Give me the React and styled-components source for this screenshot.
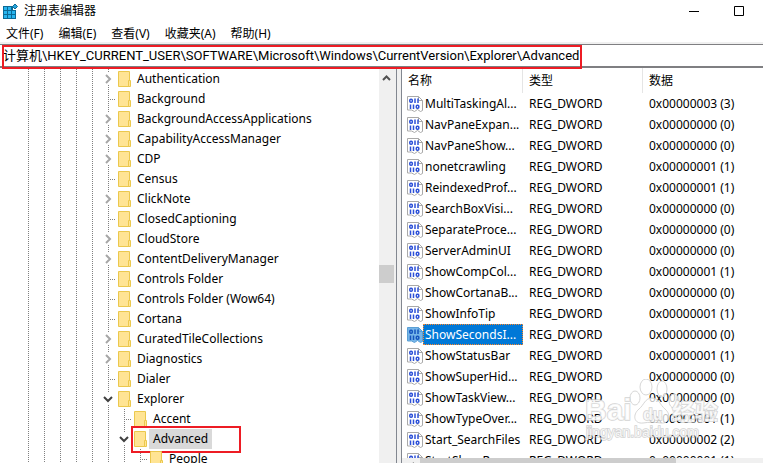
import React from "react";
import styled, { createGlobalStyle, css } from "styled-components";

const Global = createGlobalStyle`
  *, *::before, *::after { box-sizing: border-box; }
  body {
    margin: 0;
    background: #fff;
    color: #000;
    font-family: "Noto Sans", "Noto Sans CJK SC", sans-serif;
    font-size: 12px;
  }
  button, input, table { font: inherit; color: inherit; }
`;

const DOT = "#808080";

const Window = styled.div`
  display: flex;
  flex-direction: column;
  height: 100vh;
  overflow: hidden;
  background: #fff;
`;

const TitleBar = styled.header`
  display: flex;
  align-items: center;
  flex: none;
  height: 22px;
  padding: 0 2px;
`;

const Title = styled.h1`
  flex: 1;
  margin: 0 0 0 6px;
  font-size: 12px;
  font-weight: 400;
  line-height: 20px;
`;

const WindowButton = styled.button`
  display: flex;
  align-items: center;
  justify-content: center;
  width: 45px;
  height: 20px;
  padding: 0;
  border: 0;
  background: none;
`;

const MenuBar = styled.nav`
  display: flex;
  align-items: flex-end;
  gap: 15px;
  flex: none;
  height: 20px;
  padding: 0 6px;
`;

const MenuButton = styled.button`
  padding: 0;
  border: 0;
  background: none;
  line-height: 16px;
  white-space: nowrap;
`;

const AddressBar = styled.div`
  position: relative;
  flex: none;
  height: 26px;
  border-top: 2px solid #f0f0f0;
`;

const AddressInput = styled.input`
  display: block;
  width: 100%;
  height: 24px;
  padding: 0 3px 2px;
  border: solid #7f7f82;
  border-width: 1px 0 2px;
  outline: 0;
  background: #fff;
  font-family: Roboto, "Noto Sans CJK SC", sans-serif;
  font-size: 13px;
`;

const marked = css`
  position: absolute;
  border: 2px solid #ed1c24;
  pointer-events: none;
`;

const AddressMark = styled.span`
  ${marked}
  left: 2px;
  top: 1px;
  width: 580px;
  height: 24px;
`;

const RowMark = styled.span`
  ${marked}
  left: -3px;
  top: -3px;
  width: 110px;
  height: 27px;
`;

const Panes = styled.main`
  display: flex;
  flex: 1;
  min-height: 0;
`;

const TreePane = styled.section`
  display: flex;
  flex: 0 0 397px;
  border-right: 1px solid #828790;
`;

const Tree = styled.ul`
  flex: 1;
  min-width: 0;
  margin: 0;
  padding: 1px 0 0 20px;
  overflow: hidden;
  list-style: none;
`;

const TreeRow = styled.li`
  display: flex;
  align-items: center;
  height: 20px;
`;

const Guide = styled.span`
  flex: none;
  width: 16px;
  height: 20px;
  background: repeating-linear-gradient(${DOT} 0 1px, transparent 1px 2px) 8px 0 / 1px 100% no-repeat;
`;

const Leaf = styled.span`
  flex: none;
  width: 16px;
  height: 20px;
  background:
    repeating-linear-gradient(${DOT} 0 1px, transparent 1px 2px) 8px 0 / 1px 100% no-repeat,
    repeating-linear-gradient(90deg, ${DOT} 0 1px, transparent 1px 2px) 8px 10px / 7px 1px no-repeat;
`;

const Toggle = styled.button`
  display: flex;
  align-items: center;
  justify-content: center;
  flex: none;
  width: 16px;
  height: 20px;
  padding: 0;
  border: 0;
  background:
    repeating-linear-gradient(${DOT} 0 1px, transparent 1px 2px) 8px 0 / 1px 3px no-repeat,
    repeating-linear-gradient(${DOT} 0 1px, transparent 1px 2px) 8px 100% / 1px 4px no-repeat;
`;

const TreeItem = styled.span`
  position: relative;
  display: flex;
  align-items: center;
  gap: 2px;
  margin-left: 2px;
`;

const TreeLabel = styled.span`
  padding: 0 4px;
  line-height: 20px;
  white-space: nowrap;
  background: ${(p) => (p.$selected ? "#d9d9d9" : "transparent")};
`;

const ScrollTrack = styled.div`
  display: flex;
  flex-direction: column;
  align-items: flex-start;
  flex: none;
  width: 17px;
  margin-top: 1px;
  background: #f0f0f0;
`;

const ScrollUp = styled.button`
  display: flex;
  align-items: center;
  justify-content: center;
  width: 15px;
  height: 18px;
  margin-bottom: 178px;
  padding: 0;
  border: 0;
  background: none;
`;

const ScrollThumb = styled.span`
  width: 15px;
  height: 18px;
  background: #cdcdcd;
`;

const Splitter = styled.div`
  flex: 0 0 5px;
  background: #f0f0f0;
  border-right: 1px solid #828790;
`;

const ValuesPane = styled.section`
  display: flex;
  flex-direction: column;
  flex: 1;
  min-width: 0;
`;

const TableArea = styled.div`
  flex: 1;
  min-height: 0;
  overflow: hidden;
`;

const Values = styled.table`
  width: 100%;
  border-collapse: separate;
  border-spacing: 0;
  table-layout: fixed;
`;

const HeadCell = styled.th`
  width: ${(p) => p.$width || "auto"};
  height: 25px;
  padding: 0 6px;
  border-right: ${(p) => (p.$width ? "1px solid #e5e5e5" : "0")};
  font-weight: 400;
  line-height: 24px;
  text-align: left;
`;

const Cell = styled.td`
  height: 21px;
  padding: 0 6px;
  line-height: 19px;
  white-space: nowrap;
`;

const NameCell = styled(Cell)`
  padding: 0;
`;

const ValueName = styled.span`
  display: flex;
  align-items: center;
  height: 21px;
  padding-left: 5px;
`;

const ValueLabel = styled.span`
  flex: 1;
  min-width: 0;
  height: 21px;
  padding: 0 1px;
  border: 1px dotted ${(p) => (p.$selected ? "#ff8728" : "transparent")};
  background: ${(p) => (p.$selected ? "#0078d7" : "transparent")};
  color: ${(p) => (p.$selected ? "#fff" : "inherit")};
  line-height: 19px;
  white-space: nowrap;
`;

const HorizontalScroll = styled.div`
  display: flex;
  flex: none;
  height: 5px;
  overflow: hidden;
  background: #f0f0f0;
`;

const ScrollLeft = styled.button`
  display: flex;
  justify-content: center;
  flex: none;
  width: 18px;
  height: 17px;
  padding: 4px 0 0 2px;
  border: 0;
  background: none;
`;

const HorizontalThumb = styled.span`
  width: 71%;
  background: #cdcdcd;
`;

const Watermark = styled.div`
  position: absolute;
  right: 43px;
  bottom: 14px;
  pointer-events: none;
`;

const AppIcon = () => (
  <svg width="16" height="18" viewBox="0 0 16 18" aria-hidden="true">
    <path d="M1 4h10v4h3v9H1z" fill="#0b6a96" />
    <path d="M2 5h3v3H2zM6 5h3v3H6zM2 9h3v3H2zM6 9h3v3H6zM10 9h3v3h-3zM2 13h3v3H2zM6 13h3v3H6zM10 13h3v3h-3z" fill="#27b4ee" />
    <path d="M13 2l2.500 2.500L13 7l-2.500-2.500z" fill="#27a5dc" stroke="#0b6a96" strokeWidth="1" />
  </svg>
);

const Folder = () => (
  <svg width="13" height="17" viewBox="0 0 13 17" aria-hidden="true">
    <path d="M.5 .5h11v15H.5z" fill="#ffe494" stroke="#ebc84d" />
    <path d="M10.500 9.500h2v6h-2z" fill="#ffe494" stroke="#ebc84d" />
  </svg>
);

const Chevron = ({ open }) => (
  <svg width="10" height="10" viewBox="0 0 10 10" fill="none" strokeWidth="2" aria-hidden="true">
    {open ? <path d="M1 3l4 4 4-4" stroke="#404040" /> : <path d="M3 1l4 4-4 4" stroke="#a6a6a6" />}
  </svg>
);

const BinaryIcon = ({ selected }) => (
  <svg width="16" height="16" viewBox="0 0 16 16" fill="none" aria-hidden="true">
    <path d="M.5 .5h11l4 4v10l-2 1-3-2-3 2-3-1.500H.5z" fill={selected ? "#76b5e8" : "#fff"} stroke={selected ? "#5a9fd4" : "#a9a9a9"} />
    <path d="M11.500 .5v4h4" stroke={selected ? "#5a9fd4" : "#a9a9a9"} />
    <g stroke={selected ? "#1554bd" : "#2c50d8"} strokeWidth="1.500">
      <rect x="2.800" y="3.300" width="2.500" height="3" rx="1" />
      <path d="M8 2.500v4.500M11 2.500v4.500M3.500 8.500v4.500M6.500 8.500v4.500" />
      <rect x="9.300" y="9.300" width="2.500" height="3" rx="1" />
    </g>
  </svg>
);

const Paws = () => (
  <svg width="136" height="66" viewBox="0 0 136 66" aria-hidden="true">
    <g fill="#fff" fillOpacity=".75" stroke="#d2d2d2" strokeOpacity=".9">
      <ellipse cx="62" cy="8" rx="6" ry="8" />
      <ellipse cx="78" cy="10" rx="5" ry="8" />
      <ellipse cx="51" cy="19" rx="5" ry="7" />
      <ellipse cx="90" cy="22" rx="5" ry="7" />
      <path d="M68 19c7 0 8 7 13 11 7 6 4 15-4 14-6-1-12-1-18 0-9 1-11-8-4-14 5-4 6-11 13-11z" />
    </g>
    <g fill="#fff" fillOpacity=".8" stroke="#c8c8c8" strokeOpacity=".8" strokeWidth="1.500" paintOrder="stroke" fontFamily="Liberation Sans, sans-serif" fontWeight="700">
      <text x="1" y="41" fontSize="30">Bai</text>
      <text x="59" y="41" fontSize="16">du</text>
      <text x="88" y="41" fontSize="23" fontFamily="Noto Sans CJK SC, sans-serif">经验</text>
      <text x="2" y="58" fontSize="14" fontWeight="400">jingyan.baidu.com</text>
    </g>
  </svg>
);

const menus = ["文件(F)", "编辑(E)", "查看(V)", "收藏夹(A)", "帮助(H)"];

const keys = [
  ["Authentication", "closed"],
  ["Background"],
  ["BackgroundAccessApplications", "closed"],
  ["CapabilityAccessManager", "closed"],
  ["CDP", "closed"],
  ["Census"],
  ["ClickNote", "closed"],
  ["ClosedCaptioning"],
  ["CloudStore", "closed"],
  ["ContentDeliveryManager", "closed"],
  ["Controls Folder"],
  ["Controls Folder (Wow64)"],
  ["Cortana"],
  ["CuratedTileCollections", "closed"],
  ["Diagnostics", "closed"],
  ["Dialer"],
  ["Explorer", "open"],
  ["Accent", "", 6],
  ["Advanced", "open", 6],
  ["People", "", 7],
];

const values = [
  ["MultiTaskingAl...", 3],
  ["NavPaneExpan...", 0],
  ["NavPaneShow...", 0],
  ["nonetcrawling", 1],
  ["ReindexedProf...", 1],
  ["SearchBoxVisi...", 0],
  ["SeparateProce...", 0],
  ["ServerAdminUI", 0],
  ["ShowCompCol...", 1],
  ["ShowCortanaB...", 0],
  ["ShowInfoTip", 1],
  ["ShowSecondsI...", 0],
  ["ShowStatusBar", 1],
  ["ShowSuperHid...", 0],
  ["ShowTaskView...", 0],
  ["ShowTypeOver...", 1],
  ["Start_SearchFiles", 2],
  ["StartShowRun...", 1],
];

function Key({ name, state, depth = 5 }) {
  const selected = name === "Advanced";
  return (
    <TreeRow>
      {Array.from({ length: depth }, (_, i) => <Guide key={i} />)}
      {state ? (
        <Toggle aria-label={`${name} ${state}`}><Chevron open={state === "open"} /></Toggle>
      ) : <Leaf />}
      <TreeItem>
        <Folder />
        <TreeLabel $selected={selected}>{name}</TreeLabel>
        {selected && <RowMark />}
      </TreeItem>
    </TreeRow>
  );
}

export default function App() {
  return (
    <Window>
      <Global />
      <TitleBar>
        <AppIcon />
        <Title>注册表编辑器</Title>
        <WindowButton aria-label="最小化">
          <svg width="10" height="10" aria-hidden="true"><path d="M0 5.500h10" stroke="#000" /></svg>
        </WindowButton>
        <WindowButton aria-label="最大化">
          <svg width="10" height="10" aria-hidden="true"><path d="M.5 .5h9v9h-9z" fill="none" stroke="#000" /></svg>
        </WindowButton>
      </TitleBar>
      <MenuBar>{menus.map((m) => <MenuButton key={m}>{m}</MenuButton>)}</MenuBar>
      <AddressBar>
        <AddressInput
          aria-label="地址"
          defaultValue={"计算机\\HKEY_CURRENT_USER\\SOFTWARE\\Microsoft\\Windows\\CurrentVersion\\Explorer\\Advanced"}
        />
        <AddressMark />
      </AddressBar>
      <Panes>
        <TreePane>
          <Tree>
            {keys.map(([name, state, depth]) => <Key key={name} name={name} state={state} depth={depth} />)}
          </Tree>
          <ScrollTrack>
            <ScrollUp aria-label="向上滚动">
              <svg width="9" height="6" aria-hidden="true"><path d="M1 5l3.500-3.500L8 5" fill="none" stroke="#505050" strokeWidth="2" /></svg>
            </ScrollUp>
            <ScrollThumb />
          </ScrollTrack>
        </TreePane>
        <Splitter />
        <ValuesPane>
          <TableArea>
            <Values>
              <thead>
                <tr>
                  <HeadCell $width="121px">名称</HeadCell>
                  <HeadCell $width="120px">类型</HeadCell>
                  <HeadCell>数据</HeadCell>
                </tr>
              </thead>
              <tbody>
                {values.map(([name, n]) => {
                  const selected = name === "ShowSecondsI...";
                  return (
                    <tr key={name}>
                      <NameCell>
                        <ValueName>
                          <BinaryIcon selected={selected} />
                          <ValueLabel $selected={selected}>{name}</ValueLabel>
                        </ValueName>
                      </NameCell>
                      <Cell>REG_DWORD</Cell>
                      <Cell>{`0x0000000${n} (${n})`}</Cell>
                    </tr>
                  );
                })}
              </tbody>
            </Values>
          </TableArea>
          <HorizontalScroll>
            <ScrollLeft aria-label="向左滚动">
              <svg width="6" height="9" aria-hidden="true"><path d="M5 1L1.500 4.500 5 8" fill="none" stroke="#505050" strokeWidth="2" /></svg>
            </ScrollLeft>
            <HorizontalThumb />
          </HorizontalScroll>
        </ValuesPane>
      </Panes>
      <Watermark><Paws /></Watermark>
    </Window>
  );
}
